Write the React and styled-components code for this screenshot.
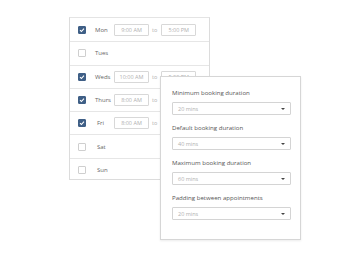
import React from 'react';
import styled, { createGlobalStyle } from 'styled-components';

const Global = createGlobalStyle`
  html, body { margin: 0; padding: 0; background: #fff; }
  body { font-family: "Open Sans", "Liberation Sans", sans-serif; color: #555; }
`

const Stage = styled.div`
  position: relative;
  width: 350px;
  height: 263px;
  overflow: hidden;
`

const Schedule = styled.div`
  position: absolute;
  left: 69px;
  top: 17px;
  width: 141px;
  height: 163px;
  border: 1px solid #dcdcdc;
  border-top-color: #e4e4e4;
  background: #fff;
  padding-top: 1px;
  box-sizing: border-box;
`

const Row = styled.div`
  display: flex;
  align-items: center;
  height: 23.3px;
  padding-left: 8px;
  border-bottom: ${p => (p.$last ? 'none' : '1px solid #e6e6e6')};
  box-sizing: border-box;
`

const Check = styled.span`
  width: 8px;
  height: 8px;
  border-radius: 1px;
  box-sizing: border-box;
  flex: none;
  display: flex;
  align-items: center;
  justify-content: center;
  background: ${p => (p.$on ? '#3f5f86' : '#fff')};
  border: 1px solid ${p => (p.$on ? '#3f5f86' : '#cfcfcf')};
`

const Day = styled.span`
  font-size: 6px;
  color: #666;
  width: ${p => (p.$indent ? 15 : 17)}px;
  margin-left: ${p => (p.$indent ? 11 : 9)}px;
  line-height: 8px;
`

const TimeBox = styled.span`
  width: 35px;
  height: 12px;
  border: 1px solid #d8d8d8;
  border-radius: 1px;
  box-sizing: border-box;
  font-size: 5.5px;
  line-height: 8px;
  color: #b0b0b0;
  display: flex;
  align-items: center;
  justify-content: center;
  margin-left: ${p => p.$ml || 0}px;
`

const To = styled.span`
  font-size: 5.5px;
  line-height: 8px;
  color: #b0b0b0;
  margin: 0 4px 0 3px;
`

const Settings = styled.div`
  position: absolute;
  left: 160px;
  top: 76px;
  width: 141px;
  height: 164px;
  background: #fff;
  border: 1px solid #d6d6d6;
  box-shadow: 0 1px 2px rgba(0, 0, 0, 0.08);
  box-sizing: border-box;
  padding: 12px 9px 0 11px;
  display: flex;
  flex-direction: column;
  gap: 9px;
`

const Field = styled.div`
  display: flex;
  flex-direction: column;
  gap: 5px;
`

const Label = styled.div`
  font-size: 6.1px;
  color: #555;
  line-height: 8px;
`

const Select = styled.div`
  height: 13px;
  border: 1px solid #d4d4d4;
  border-radius: 1px;
  box-sizing: border-box;
  display: flex;
  align-items: center;
  justify-content: space-between;
  padding: 0 5px;
  font-size: 5.5px;
  line-height: 8px;
  color: #b0b0b0;
`

const Caret = styled.span`
  width: 0;
  height: 0;
  border-left: 2px solid transparent;
  border-right: 2px solid transparent;
  border-top: 2.5px solid #444;
`

// end times of Thurs and Fri sit fully under the settings card
const days = [
  { d: 'Mon', on: true, from: '9:00 AM', to: '5:00 PM' },
  { d: 'Tues' },
  { d: 'Weds', on: true, from: '10:00 AM', to: '5:00 PM' },
  { d: 'Thurs', on: true, from: '8:00 AM', to: '' },
  { d: 'Fri', on: true, from: '8:00 AM', to: '', indent: true },
  { d: 'Sat', indent: true },
  { d: 'Sun', indent: true },
]

const fields = [
  ['Minimum booking duration', '20 mins'],
  ['Default booking duration', '40 mins'],
  ['Maximum booking duration', '60 mins'],
  ['Padding between appointments', '20 mins'],
]

function Tick() {
  return (
    <svg width="6" height="6" viewBox="0 0 6 6">
      <path d="M1 3.2 L2.4 4.5 L5 1.6" fill="none" stroke="#fff" strokeWidth="1.1" />
    </svg>
  )
}

export default function App() {
  return (
    <Stage>
      <Global />
      <Schedule>
        {days.map((r, i) => (
          <Row key={r.d} $last={i === days.length - 1}>
            <Check $on={r.on}>{r.on && <Tick />}</Check>
            <Day $indent={r.indent}>{r.d}</Day>
            {r.from && (
              <>
                <TimeBox $ml={2}>{r.from}</TimeBox>
                <To>to</To>
                <TimeBox>{r.to}</TimeBox>
              </>
            )}
          </Row>
        ))}
      </Schedule>
      <Settings>
        {fields.map(([l, v]) => (
          <Field key={l}>
            <Label>{l}</Label>
            <Select>
              <span>{v}</span>
              <Caret />
            </Select>
          </Field>
        ))}
      </Settings>
    </Stage>
  )
}
